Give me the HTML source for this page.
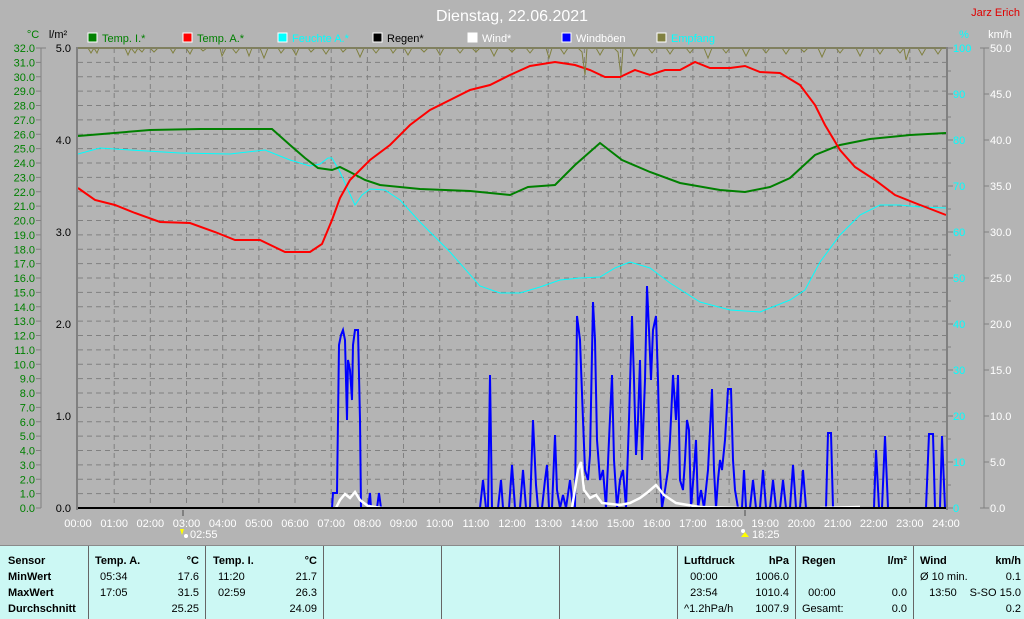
<!DOCTYPE html>
<html><head><meta charset="utf-8"><style>
html,body{margin:0;padding:0;background:#b4b4b4;}
body{width:1024px;height:618px;overflow:hidden;position:relative;font-family:"Liberation Sans",Arial,sans-serif;}
svg{position:absolute;left:0;top:0}
.tbl{position:absolute;left:0;top:545px;width:1024px;height:73px;background:#ccf8f4;border-top:1px solid #8a8a8a;}
.c{position:absolute;top:0;height:73px;border-left:1px solid #666;}
.t{position:absolute;font-size:11px;color:#000;white-space:nowrap;line-height:16px}
.b{font-weight:bold}
.r{text-align:right}
</style></head><body>
<svg width="1024" height="545" viewBox="0 0 1024 545" font-family="Liberation Sans, Arial, sans-serif">
<text x="512" y="21" fill="#fff" font-size="16" text-anchor="middle">Dienstag, 22.06.2021</text>
<text x="1020" y="16" fill="#e00000" font-size="11" text-anchor="end">Jarz Erich</text>
<text x="33" y="38" fill="#008000" font-size="11" text-anchor="middle">°C</text>
<text x="58" y="38" fill="#000" font-size="11" text-anchor="middle">l/m²</text>
<text x="964" y="38" fill="#00ffff" font-size="11" text-anchor="middle">%</text>
<text x="1000" y="38" fill="#fff" font-size="11" text-anchor="middle">km/h</text>
<g font-size="11">
<rect x="88" y="33" width="9" height="9" fill="#008000" stroke="#fff"/><text x="102" y="42" fill="#008000">Temp. I.*</text>
<rect x="183" y="33" width="9" height="9" fill="#ff0000" stroke="#fff"/><text x="197" y="42" fill="#008000">Temp. A.*</text>
<rect x="278" y="33" width="9" height="9" fill="#00ffff" stroke="#fff"/><text x="292" y="42" fill="#00ffff">Feuchte A.*</text>
<rect x="373" y="33" width="9" height="9" fill="#000" stroke="#fff"/><text x="387" y="42" fill="#000">Regen*</text>
<rect x="468" y="33" width="9" height="9" fill="#fff" stroke="#fff"/><text x="482" y="42" fill="#fff">Wind*</text>
<rect x="562" y="33" width="9" height="9" fill="#0000ff" stroke="#fff"/><text x="576" y="42" fill="#fff">Windböen</text>
<rect x="657" y="33" width="9" height="9" fill="#808040" stroke="#fff"/><text x="671" y="42" fill="#00ffff">Empfang</text>
</g>
<path stroke="#808080" stroke-width="1" stroke-dasharray="5,4" fill="none" d="M78,62.4H946M78,76.8H946M78,91.1H946M78,105.5H946M78,119.9H946M78,134.3H946M78,148.6H946M78,163H946M78,177.4H946M78,191.8H946M78,206.1H946M78,220.5H946M78,234.9H946M78,249.3H946M78,263.6H946M78,278H946M78,292.4H946M78,306.8H946M78,321.1H946M78,335.5H946M78,349.9H946M78,364.3H946M78,378.6H946M78,393H946M78,407.4H946M78,421.8H946M78,436.1H946M78,450.5H946M78,464.9H946M78,479.3H946M78,493.6H946
M114.2,48V508M150.3,48V508M186.5,48V508M222.7,48V508M258.9,48V508M295,48V508M331.2,48V508M367.4,48V508M403.5,48V508M439.7,48V508M475.9,48V508M512,48V508M548.2,48V508M584.4,48V508M620.6,48V508M656.7,48V508M692.9,48V508M729.1,48V508M765.2,48V508M801.4,48V508M837.6,48V508M873.7,48V508M909.9,48V508"/>
<line x1="41" y1="48" x2="41" y2="508" stroke="#808080"/>
<g stroke="#808080"><path d="M36,48H46M36,62.4H41M36,76.8H41M36,91.1H41M36,105.5H41M36,119.9H41M36,134.3H41M36,148.6H41M36,163H41M36,177.4H41M36,191.8H41M36,206.1H41M36,220.5H41M36,234.9H41M36,249.3H41M36,263.6H41M36,278H41M36,292.4H41M36,306.8H41M36,321.1H41M36,335.5H41M36,349.9H41M36,364.3H41M36,378.6H41M36,393H41M36,407.4H41M36,421.8H41M36,436.1H41M36,450.5H41M36,464.9H41M36,479.3H41M36,493.6H41M36,508H41"/></g>
<g fill="#008000" font-size="11" text-anchor="end">
<text x="35" y="52">32.0</text><text x="35" y="66.4">31.0</text><text x="35" y="80.8">30.0</text><text x="35" y="95.1">29.0</text><text x="35" y="109.5">28.0</text><text x="35" y="123.9">27.0</text><text x="35" y="138.3">26.0</text><text x="35" y="152.6">25.0</text><text x="35" y="167">24.0</text><text x="35" y="181.4">23.0</text><text x="35" y="195.8">22.0</text><text x="35" y="210.1">21.0</text><text x="35" y="224.5">20.0</text><text x="35" y="238.9">19.0</text><text x="35" y="253.3">18.0</text><text x="35" y="267.6">17.0</text><text x="35" y="282">16.0</text><text x="35" y="296.4">15.0</text><text x="35" y="310.8">14.0</text><text x="35" y="325.1">13.0</text><text x="35" y="339.5">12.0</text><text x="35" y="353.9">11.0</text><text x="35" y="368.3">10.0</text><text x="35" y="382.6">9.0</text><text x="35" y="397">8.0</text><text x="35" y="411.4">7.0</text><text x="35" y="425.8">6.0</text><text x="35" y="440.1">5.0</text><text x="35" y="454.5">4.0</text><text x="35" y="468.9">3.0</text><text x="35" y="483.3">2.0</text><text x="35" y="497.6">1.0</text><text x="35" y="512">0.0</text>
</g>
<g fill="#000" font-size="11" text-anchor="end">
<text x="71" y="52">5.0</text><text x="71" y="144">4.0</text><text x="71" y="236">3.0</text><text x="71" y="328">2.0</text><text x="71" y="420">1.0</text><text x="71" y="512">0.0</text>
</g>
<g stroke="#808080"><path d="M948,48H953M948,71H951M948,94H953M948,117H951M948,140H953M948,163H951M948,186H953M948,209H951M948,232H953M948,255H951M948,278H953M948,301H951M948,324H953M948,347H951M948,370H953M948,393H951M948,416H953M948,439H951M948,462H953M948,485H951M948,508H953"/>
<line x1="984" y1="48" x2="984" y2="508"/>
<path d="M980,48H989M984,94H989M984,140H989M984,186H989M984,232H989M984,278H989M984,324H989M984,370H989M984,416H989M984,462H989M980,508H989"/></g>
<g fill="#00ffff" font-size="11">
<text x="953" y="52">100</text><text x="953" y="98">90</text><text x="953" y="144">80</text><text x="953" y="190">70</text><text x="953" y="236">60</text><text x="953" y="282">50</text><text x="953" y="328">40</text><text x="953" y="374">30</text><text x="953" y="420">20</text><text x="953" y="466">10</text><text x="953" y="512">0</text>
</g>
<g fill="#fff" font-size="11">
<text x="990" y="52">50.0</text><text x="990" y="98">45.0</text><text x="990" y="144">40.0</text><text x="990" y="190">35.0</text><text x="990" y="236">30.0</text><text x="990" y="282">25.0</text><text x="990" y="328">20.0</text><text x="990" y="374">15.0</text><text x="990" y="420">10.0</text><text x="990" y="466">5.0</text><text x="990" y="512">0.0</text>
</g>
<polyline fill="none" stroke="#00ffff" stroke-width="1" points="78,154 100,148 130,150 180,153 230,154 265,150 290,160 310,166 320,164 328,158 332,158 340,172 348,190 355,205 362,195 370,189 385,190 400,200 420,222 450,252 480,286 500,293 520,293 540,287 560,280 580,278 600,277 615,268 630,262 650,268 670,283 700,302 730,310 760,312 790,300 805,290 820,262 840,235 860,215 880,205 900,205 920,207 946,208"/>
<polyline fill="none" stroke="#008000" stroke-width="2" points="78,136 150,130 200,129 272,129 290,145 305,158 318,168 332,170 340,167 350,172 365,180 380,185 420,189 470,191 510,195 528,187 555,185 575,165 600,143 622,160 650,172 680,183 720,190 745,192 770,187 790,178 815,155 840,145 870,139 910,135 946,133"/>
<polyline fill="none" stroke="#ff0000" stroke-width="2" points="78,188 95,200 115,205 135,213 160,222 190,223 215,232 235,240 260,240 285,252 310,252 322,244 332,220 340,198 350,180 370,160 390,145 410,125 430,110 450,100 470,90 490,85 510,75 530,66 555,62 575,65 590,70 605,77 620,77 635,70 650,75 665,70 680,70 695,62 710,68 730,68 745,66 760,72 780,73 800,85 815,105 825,125 840,150 855,167 875,180 895,195 915,203 946,215"/>
<polyline fill="none" stroke="#808040" stroke-width="1" points="78,48 88,48 91,53 94,48 97,53 99,48 125,48 128,55 131,48 135,53 138,48 142,52 145,48 150,48 154,52 158,48 170,48 173,53 176,48 186,48 190,54 193,48 200,48 203,51 207,48 220,48 222,56 226,48 232,48 236,53 240,48 246,48 249,56 252,48 260,48 264,58 268,48 278,48 281,53 285,48 292,48 296,55 299,48 308,48 311,52 315,48 322,48 326,54 330,48 340,48 343,52 347,48 356,48 360,57 364,48 372,48 376,53 380,48 390,48 393,53 397,48 404,48 408,55 412,48 420,48 424,52 428,48 436,48 440,55 444,48 456,48 460,53 464,48 472,48 476,52 480,48 490,48 494,56 498,48 508,48 512,52 516,48 526,48 530,53 534,48 546,48 549,58 552,48 560,48 564,54 568,48 578,48 582,52 585,75 587,48 596,48 600,55 604,48 614,48 618,52 621,76 623,48 630,48 634,56 638,48 648,48 652,53 656,48 666,48 670,54 674,48 686,48 690,53 694,48 704,48 708,58 712,48 722,48 726,53 730,48 742,48 746,56 750,48 762,48 766,53 770,48 782,48 786,54 790,48 800,48 804,52 808,48 818,48 822,57 826,48 836,48 840,53 844,48 856,48 860,56 864,48 876,48 880,54 884,48 896,48 900,53 904,48 906,60 910,48 918,48 922,55 926,48 934,48 938,54 942,48 946,48"/>
<path fill="none" stroke="#0000ff" stroke-width="2" d="M332,508 L333,493 L337,493 L339,345 L341,335 L343,330 L345,340 L347,420 L348,360 L350,370 L352,400 L353,345 L355,330 L358,330 L360,420 L361,508 M368,508 L370,493 L371,508 M377,508 L379,493 L381,508
M480,508 L483,480 L486,508 M488,508 L490,375 L492,508 M498,508 L501,480 L503,508 M509,508 L512,465 L515,508 M520,508 L523,470 L526,508 M530,508 L533,420 L536,485 L538,508 M542,508 L545,480 L547,465 L549,508 M552,508 L555,435 L557,490 L560,508 L563,495 L566,508 L570,480 L573,508
M575,508 L577,316 L580,340 L583,420 L585,470 L588,480 L590,455 L593,302 L595,340 L597,440 L600,480 L603,470 L606,508 L609,440 L612,375 L614,460 L617,508 L620,480 L623,470 L626,508 L629,420 L632,316 L634,380 L636,455 L638,420 L640,360 L642,460 L645,380 L647,286 L649,330 L651,380 L653,330 L656,316 L658,380 L660,470 L662,508 L665,490 L668,470 L670,440 L673,375 L676,420 L678,375 L680,480 L683,490 L685,460 L687,420 L689,430 L691,508 L694,470 L696,440 L698,508 L701,490 L704,508 L708,470 L710,430 L712,389 L714,470 L716,508 L718,480 L720,460 L722,470 L725,440 L728,389 L731,389 L733,460 L735,490 L738,508
M742,508 L744,470 L746,508 M750,508 L753,480 L756,508 M760,508 L763,470 L766,508 M770,508 L773,480 L776,508 M780,508 L783,480 L786,508 M790,508 L793,465 L796,508 M800,508 L803,470 L806,508 M826,508 L828,433 L831,433 L833,508 M874,508 L876,450 L879,508 M882,508 L885,436 L888,508 M926,508 L929,434 L933,434 L935,508 M940,508 L942,436 L945,508"/>
<path fill="none" stroke="#fff" stroke-width="2.5" d="M336,508 L340,500 L345,494 L350,498 L355,492 L360,500 L368,506 L382,508 M572,508 L578,470 L581,462 L584,490 L590,498 L596,495 L602,503 L620,505 L630,503 L640,498 L648,492 L656,485 L664,495 L676,503 L700,507 L740,508 M820,508 L860,507"/>
<line x1="77" y1="48" x2="947" y2="48" stroke="#808080" stroke-width="2"/>
<line x1="77" y1="47" x2="77" y2="510" stroke="#808080" stroke-width="2"/>
<line x1="947" y1="47" x2="947" y2="510" stroke="#808080" stroke-width="2"/>
<line x1="78" y1="508" x2="946" y2="508" stroke="#000" stroke-width="2"/>
<line x1="78" y1="48" x2="946" y2="48" stroke="#808040" stroke-width="1"/>
<g fill="#fff" font-size="11" text-anchor="middle">
<text x="78" y="527">00:00</text><text x="114.2" y="527">01:00</text><text x="150.3" y="527">02:00</text><text x="186.5" y="527">03:00</text><text x="222.7" y="527">04:00</text><text x="258.9" y="527">05:00</text><text x="295" y="527">06:00</text><text x="331.2" y="527">07:00</text><text x="367.4" y="527">08:00</text><text x="403.5" y="527">09:00</text><text x="439.7" y="527">10:00</text><text x="475.9" y="527">11:00</text><text x="512" y="527">12:00</text><text x="548.2" y="527">13:00</text><text x="584.4" y="527">14:00</text><text x="620.6" y="527">15:00</text><text x="656.7" y="527">16:00</text><text x="692.9" y="527">17:00</text><text x="729.1" y="527">18:00</text><text x="765.2" y="527">19:00</text><text x="801.4" y="527">20:00</text><text x="837.6" y="527">21:00</text><text x="873.7" y="527">22:00</text><text x="909.9" y="527">23:00</text><text x="946" y="527">24:00</text>
</g>
<line x1="183" y1="510" x2="183" y2="516" stroke="#808080" stroke-width="2"/>
<line x1="745" y1="510" x2="745" y2="516" stroke="#808080" stroke-width="2"/>
<path d="M180,529 L184,529 L182,535 Z" fill="#ffff00"/><circle cx="186" cy="536" r="2" fill="#fff"/>
<text x="190" y="538" fill="#fff" font-size="11">02:55</text>
<circle cx="743" cy="531" r="2" fill="#fff"/><path d="M745,532 L749,537 L741,537 Z" fill="#ffff00"/>
<text x="752" y="538" fill="#fff" font-size="11">18:25</text>
</svg>
<div class="tbl">
<div class="c" style="left:88px"></div><div class="c" style="left:205px"></div><div class="c" style="left:323px"></div><div class="c" style="left:441px"></div><div class="c" style="left:559px"></div><div class="c" style="left:677px"></div><div class="c" style="left:795px"></div><div class="c" style="left:913px"></div>
<div class="t b" style="left:8px;top:7px">Sensor<br>MinWert<br>MaxWert<br>Durchschnitt</div>
<div class="t b" style="left:95px;top:7px">Temp. A.</div><div class="t b r" style="left:150px;width:49px;top:7px">°C</div>
<div class="t" style="left:100px;top:23px">05:34<br>17:05</div><div class="t r" style="left:150px;width:49px;top:23px">17.6<br>31.5<br>25.25</div>
<div class="t b" style="left:213px;top:7px">Temp. I.</div><div class="t b r" style="left:268px;width:49px;top:7px">°C</div>
<div class="t" style="left:218px;top:23px">11:20<br>02:59</div><div class="t r" style="left:268px;width:49px;top:23px">21.7<br>26.3<br>24.09</div>
<div class="t b" style="left:684px;top:7px">Luftdruck</div><div class="t b r" style="left:740px;width:49px;top:7px">hPa</div>
<div class="t" style="left:684px;top:23px">&nbsp;&nbsp;00:00<br>&nbsp;&nbsp;23:54<br>^1.2hPa/h</div><div class="t r" style="left:730px;width:59px;top:23px">1006.0<br>1010.4<br>1007.9</div>
<div class="t b" style="left:802px;top:7px">Regen</div><div class="t b r" style="left:858px;width:49px;top:7px">l/m²</div>
<div class="t" style="left:802px;top:23px"><br>&nbsp;&nbsp;00:00<br>Gesamt:</div><div class="t r" style="left:858px;width:49px;top:23px"><br>0.0<br>0.0</div>
<div class="t b" style="left:920px;top:7px">Wind</div><div class="t b r" style="left:970px;width:51px;top:7px">km/h</div>
<div class="t" style="left:920px;top:23px">Ø 10 min.<br>&nbsp;&nbsp;&nbsp;13:50</div><div class="t r" style="left:960px;width:61px;top:23px">0.1<br>S-SO 15.0<br>0.2</div>
</div>
</body></html>
